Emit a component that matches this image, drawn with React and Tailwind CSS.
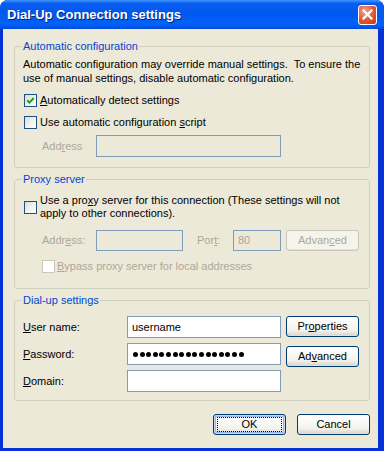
import React from "react";

function U({ children }) {
  return <span className="underline underline-offset-[1px] decoration-1">{children}</span>;
}

function Check({ checked, disabled }) {
  return (
    <div
      className={`w-[13px] h-[13px] shrink-0 border flex items-center justify-center ${
        disabled
          ? "border-[#cac8bb] bg-white"
          : "border-[#1c5180] bg-[linear-gradient(135deg,#dcdcd7,#f4f4f0_60%,#ffffff)]"
      }`}
    >
      {checked && (
        <svg width="9" height="9" viewBox="0 0 9 9">
          <path d="M1.2 4.2 L3.4 6.6 L7.8 2" stroke="#21a121" strokeWidth="2" fill="none" />
        </svg>
      )}
    </div>
  );
}

function Btn({ children, disabled, focused }) {
  return (
    <div
      className={`w-[73px] h-[21px] shrink-0 flex items-center justify-center rounded-[3px] border ${
        disabled
          ? "border-[#c9c7ba] text-[#aca899] bg-[#f5f4ea]"
          : "border-[#003c74] text-black bg-[linear-gradient(to_bottom,#ffffff,#f3f3ee_70%,#d8d2c6)]"
      } ${focused ? "shadow-[inset_0_0_0_1px_#c5d8f7,inset_0_0_0_2px_#9ab6ee]" : "shadow-[inset_0_-1px_0_#e3e0d2]"}`}
    >
      {focused ? (
        <div className="w-[65px] h-[15px] border border-dotted border-[#000] flex items-center justify-center">
          {children}
        </div>
      ) : (
        children
      )}
    </div>
  );
}

function Input({ w, disabled, children, h = "h-[22px]" }) {
  return (
    <div
      className={`${w} ${h} shrink-0 border border-[#7f9db9] flex items-center pl-[4px] ${
        disabled ? "bg-[#ece9d8] text-[#aca899]" : "bg-white text-black"
      }`}
    >
      {children}
    </div>
  );
}

function Legend({ children }) {
  return <legend className="-ml-[1px] px-[1px] text-[#0046d5] leading-[13px]">{children}</legend>;
}

export default function App() {
  const dots = Array.from({ length: 17 });
  return (
    <div className="w-[384px] h-[451px] bg-[#0831d9] rounded-t-[8px] flex flex-col overflow-hidden font-['Liberation_Sans',Arial,sans-serif] text-[11px] text-black">
      {/* title bar */}
      <div className="h-[29px] shrink-0 flex items-center bg-[linear-gradient(to_bottom,#3d95ff,#0a5cf0_12%,#0058ee_45%,#0062f8_85%,#0046d6)]">
        <div className="ml-[7px] text-white font-bold text-[13px] leading-[16px] [text-shadow:1px_1px_0_#0a1f7a]">
          Dial-Up Connection settings
        </div>
        <div className="ml-auto mr-[7px] w-[19px] h-[20px] rounded-[3px] border border-white bg-[radial-gradient(circle_at_35%_30%,#f3a68d,#e1552f_55%,#c23b17)] flex items-center justify-center">
          <svg width="11" height="11" viewBox="0 0 11 11">
            <path d="M1.5 1.5 L9.5 9.5 M9.5 1.5 L1.5 9.5" stroke="#fff" strokeWidth="2.2" strokeLinecap="square" />
          </svg>
        </div>
      </div>

      {/* client */}
      <div className="flex-1 ml-[3px] mr-[6px] mb-[3px] bg-[#ece9d8] flex flex-col pt-[11px]">
        {/* group 1 */}
        <fieldset className="border border-[#d0d0bf] rounded-[3px] ml-[11px] mr-[8px] pl-[8px] pr-[6px] pb-[10px]">
          <Legend>Automatic configuration</Legend>
          <p className="mt-[4px] leading-[14px]">
            Automatic configuration may override manual settings.&nbsp; To ensure the
            <br />
            use of manual settings, disable automatic configuration.
          </p>
          <div className="mt-[9px] h-[13px] flex items-center ml-[1px] gap-[3px]">
            <Check checked />
            <span className="leading-[13px]">
              <U>A</U>utomatically detect settings
            </span>
          </div>
          <div className="mt-[9px] h-[13px] flex items-center ml-[1px] gap-[3px]">
            <Check />
            <span className="leading-[13px]">
              Use automatic configuration <U>s</U>cript
            </span>
          </div>
          <div className="mt-[6px] flex items-center">
            <div className="w-[73px] pl-[19px] text-[#aca899]">
              Add<U>r</U>ess
            </div>
            <Input w="w-[185px]" disabled />
          </div>
        </fieldset>

        {/* group 2 */}
        <fieldset className="border border-[#d0d0bf] rounded-[3px] ml-[11px] mr-[8px] mt-[5px] pl-[8px] pr-[6px] pb-[15px]">
          <Legend>Proxy server</Legend>
          <div className="mt-[8px] flex items-center ml-[1px] gap-[3px]">
            <Check />
            <span className="leading-[13px]">
              Use a pro<U>x</U>y server for this connection (These settings will not
              <br />
              apply to other connections).
            </span>
          </div>
          <div className="mt-[10px] h-[21px] flex items-center">
            <div className="w-[73px] pl-[19px] text-[#aca899]">
              Addr<U>e</U>ss:
            </div>
            <Input w="w-[87px]" h="h-[21px]" disabled />
            <div className="ml-[14px] w-[36px] text-[#aca899]">
              Por<U>t</U>:
            </div>
            <Input w="w-[48px]" h="h-[21px]" disabled>
              80
            </Input>
            <div className="ml-[5px]">
              <Btn disabled>
                <span>
                  Advan<U>c</U>ed
                </span>
              </Btn>
            </div>
          </div>
          <div className="mt-[9px] h-[13px] flex items-center ml-[19px] gap-[2px] text-[#aca899]">
            <Check disabled />
            <span className="leading-[13px]">
              <U>B</U>ypass proxy server for local addresses
            </span>
          </div>
        </fieldset>

        {/* group 3 */}
        <fieldset className="border border-[#d0d0bf] rounded-[3px] ml-[11px] mr-[8px] mt-[5px] pl-[8px] pr-[6px] pb-[8px]">
          <Legend>Dial-up settings</Legend>
          <div className="mt-[9px] flex">
            <div className="flex flex-col gap-[5px]">
              <div className="flex items-center">
                <div className="w-[104px]">
                  <U>U</U>ser name:
                </div>
                <Input w="w-[154px]">username</Input>
              </div>
              <div className="flex items-center">
                <div className="w-[104px]">
                  <U>P</U>assword:
                </div>
                <Input w="w-[154px]">
                  <div className="flex gap-[1.6px] pl-[1px]">
                    {dots.map((_, i) => (
                      <div key={i} className="w-[5px] h-[5px] rounded-full bg-black" />
                    ))}
                  </div>
                </Input>
              </div>
              <div className="flex items-center">
                <div className="w-[104px]">
                  <U>D</U>omain:
                </div>
                <Input w="w-[154px]" />
              </div>
            </div>
            <div className="ml-[5px] flex flex-col gap-[9px]">
              <Btn>
                <span>
                  Pr<U>o</U>perties
                </span>
              </Btn>
              <Btn>
                <span>
                  Ad<U>v</U>anced
                </span>
              </Btn>
            </div>
          </div>
        </fieldset>

        {/* bottom buttons */}
        <div className="mt-[13px] mr-[8px] flex justify-end gap-[11px]">
          <Btn focused>OK</Btn>
          <Btn>Cancel</Btn>
        </div>
      </div>
    </div>
  );
}
